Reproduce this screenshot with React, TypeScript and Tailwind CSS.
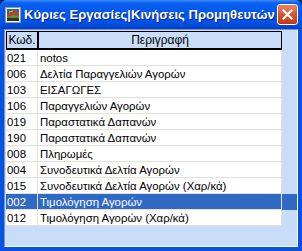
import React from "react";

const rows = [
  { code: "021", name: "notos" },
  { code: "006", name: "Δελτία Παραγγελιών Αγορών" },
  { code: "103", name: "ΕΙΣΑΓΩΓΕΣ" },
  { code: "106", name: "Παραγγελιών Αγορών" },
  { code: "019", name: "Παραστατικά Δαπανών" },
  { code: "190", name: "Παραστατικά Δαπανών" },
  { code: "008", name: "Πληρωμές" },
  { code: "004", name: "Συνοδευτικά Δελτία Αγορών" },
  { code: "015", name: "Συνοδευτικά Δελτία Αγορών (Χαρ/κά)" },
  { code: "002", name: "Τιμολόγηση Αγορών" },
  { code: "012", name: "Τιμολόγηση Αγορών (Χαρ/κά)" },
];

const selected = "002";

function AppIcon() {
  return (
    <svg width="16" height="16" viewBox="0 0 16 16" className="shrink-0">
      <rect x="0.5" y="0.5" width="15" height="15" fill="#f4f4f4" stroke="#9a9a9a" />
      <rect x="2" y="2" width="12" height="12" fill="#2e6f78" />
      <path d="M2 7 L9 3 L14 5 L14 8 L6 10 L2 10 Z" fill="#b5452a" />
      <path d="M2 10 L8 8 L14 9 L14 11 L2 12 Z" fill="#4f9a3a" />
      <rect x="2" y="11" width="12" height="3" fill="#3a3020" />
      <path d="M4 5 L8 4" stroke="#e8c060" strokeWidth="1" />
    </svg>
  );
}

function CloseButton() {
  return (
    <div className="shrink-0 w-[21px] h-[21px] rounded-[3px] border border-white bg-gradient-to-b from-[#e88a6a] via-[#d9532b] to-[#c23c14] flex items-center justify-center shadow-[inset_0_0_1px_#7a1a00]">
      <svg width="11" height="11" viewBox="0 0 11 11">
        <path d="M1.5 1.5 L9.5 9.5 M9.5 1.5 L1.5 9.5" stroke="white" strokeWidth="2.2" strokeLinecap="square" />
      </svg>
    </div>
  );
}

export default function App() {
  return (
    <div className="w-[302px] h-[251px] bg-[#102a70]">
      <div
        className="w-full h-full flex flex-col rounded-t-[7px] overflow-hidden bg-[#0652e2]"
        style={{ fontFamily: '"Liberation Sans", Arial, sans-serif' }}
      >
        {/* title bar */}
        <div className="h-[29px] shrink-0 flex items-center pl-[5px] pr-[4px] bg-[linear-gradient(to_bottom,#3d8fff_0%,#0a5ff0_10%,#0058ee_45%,#0054e6_75%,#0048d8_92%,#003fc6_100%)]">
          <AppIcon />
          <div className="ml-[3px] flex-1 min-w-0 text-white font-bold text-[13.1px] leading-none whitespace-nowrap [text-shadow:1px_1px_#0a1a80]">
            Κύριες Εργασίες|Κινήσεις Προμηθευτών
          </div>
          <CloseButton />
        </div>

        {/* frame + client */}
        <div className="flex-1 flex pl-[4px] pr-[4px] pb-[4px]">
          <div className="flex-1 flex flex-col bg-[#c9ddf8] border-t border-l border-[#8294b0] border-r-white border-b-white border-r border-b pl-[1px] pt-[1px] text-[11.4px] text-black">
            {/* header */}
            <div className="flex h-[19px] shrink-0 text-[12px]">
              <div className="w-[32px] border-t border-l border-r border-b-2 border-black flex items-center justify-center">
                Κωδ.
              </div>
              <div className="w-[244px] border-t border-l border-r border-b-2 border-black flex items-center justify-center">
                Περιγραφή
              </div>
            </div>

            {/* rows */}
            {rows.map((r) => {
              const isSel = r.code === selected;
              return (
                <div key={r.code} className={`flex h-[16px] shrink-0 ${isSel ? "bg-[#316ac5] text-white" : ""}`}>
                  <div
                    className={`w-[32px] border-b border-r border-[#e2e1da] pl-[1px] leading-[16px] ${
                      isSel ? "" : "bg-white"
                    }`}
                  >
                    {r.code}
                  </div>
                  <div
                    className={`w-[244px] border-b border-r border-[#e2e1da] pl-[2px] leading-[16px] whitespace-nowrap overflow-hidden ${
                      isSel ? "" : "bg-white"
                    }`}
                  >
                    {r.name}
                  </div>
                  <div className="flex-1" />
                </div>
              );
            })}
          </div>
        </div>
      </div>
    </div>
  );
}
